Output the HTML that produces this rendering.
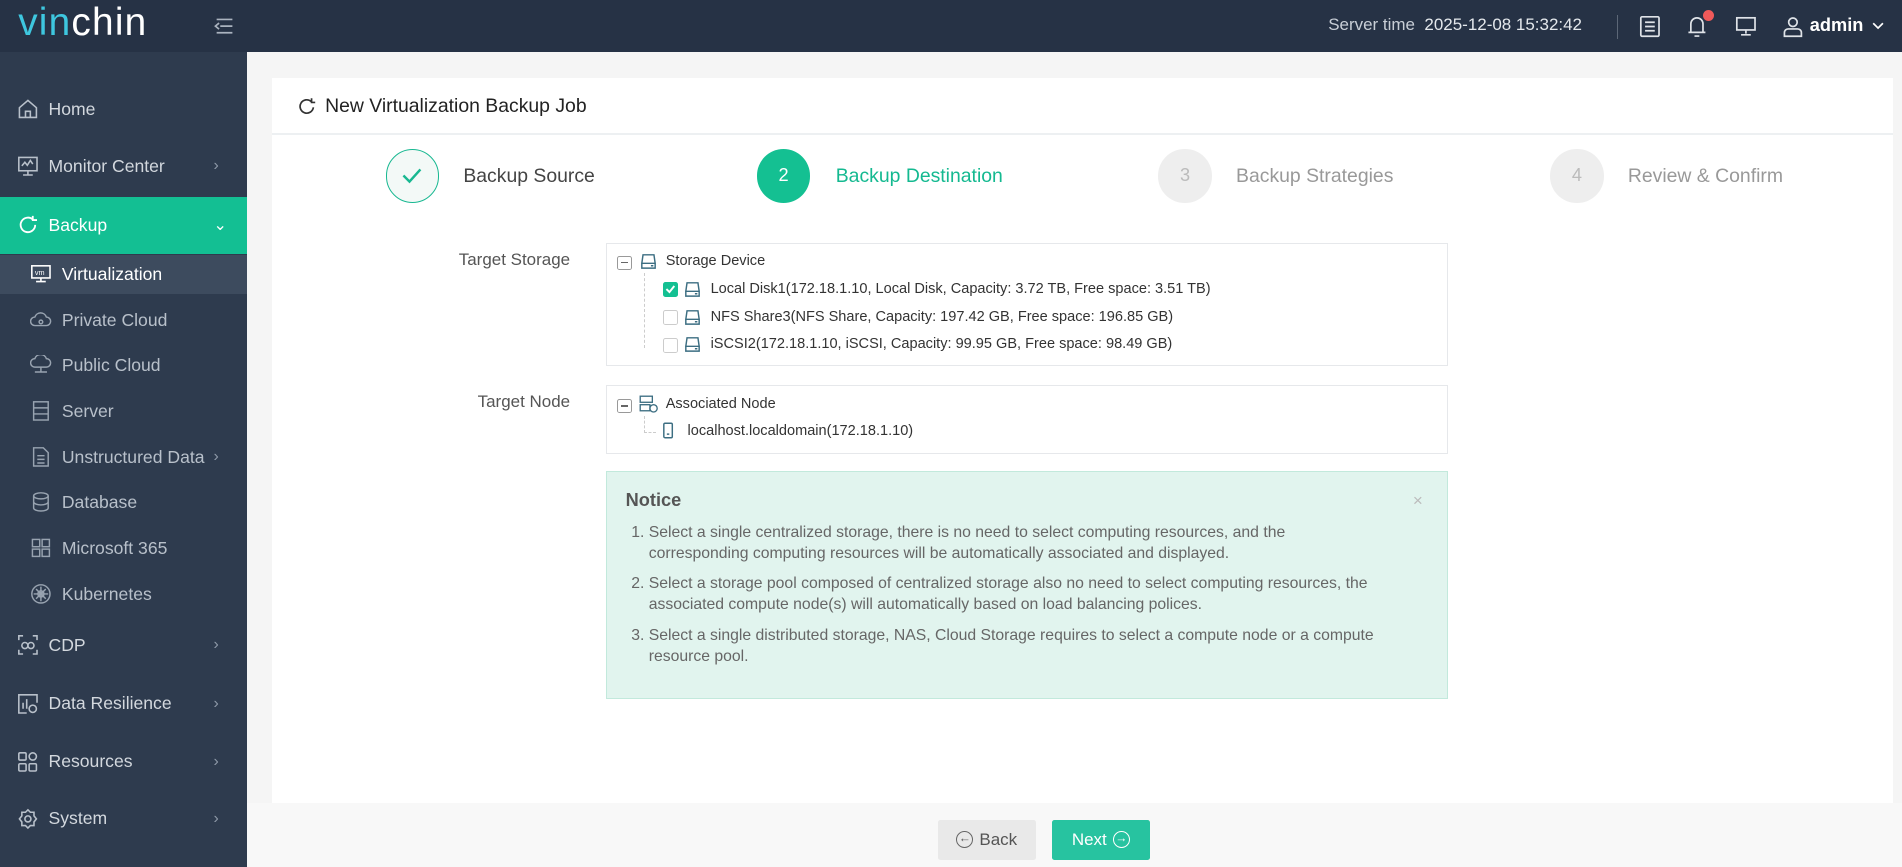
<!DOCTYPE html>
<html><head><meta charset="utf-8"><style>
*{box-sizing:border-box;margin:0;padding:0}
html,body{width:1902px;height:867px;overflow:hidden;background:#f5f5f5;font-family:"Liberation Sans",sans-serif}
#w{zoom:1.21301;width:1568px;height:715px;position:relative}
.a{position:absolute}
.top{left:0;top:0;width:1568px;height:43px;background:#263245}
.side{left:0;top:43px;width:204px;height:672px;background:#2e3b4e}
.ni{position:absolute;left:0;width:204px;color:#d3d8de;font-size:14.5px;display:flex;align-items:center}
.ni svg{position:absolute;left:14px}
.ni span{position:absolute;left:40px}
.sub span{left:51px}
.sub svg{left:25px}
.chev{position:absolute;left:176px;color:#8e99a8;font-size:13px}
.card{left:224px;top:64px;width:1337px;height:598px;background:#fff}
.circ{position:absolute;width:44px;height:44px;border-radius:50%;display:flex;align-items:center;justify-content:center;font-size:15px}
.sl{position:absolute;font-size:16px}
.box{position:absolute;border:1px solid #e6e8eb;background:#fff}
.tr{position:absolute;font-size:12px;color:#333;white-space:nowrap}
.cb{position:absolute;width:12px;height:12px;border:1px solid #ccc;border-radius:2px;background:#fff}
.lbl{position:absolute;font-size:14px;color:#555;text-align:right;width:120px}
.bot{left:204px;top:662px;width:1364px;height:53px;background:#f8f8f8}
</style></head><body><div id="w">
<div class="a top">
 <div class="a" style="left:15px;top:1px;font-size:32px;letter-spacing:1px"><span style="color:#3ec7df">vin</span><span style="color:#fff">chin</span></div>
 <svg class="a" style="left:176px;top:14px" width="17" height="15" viewBox="0 0 17 15" fill="none" stroke="#aab3bf" stroke-width="1.4"><path d="M3 2h13M6 7.5h10M3 13h13M5 5L2 7.5 5 10"/></svg>
 <div class="a" style="left:1095px;top:12px;font-size:14px;color:#c8ced6">Server time&nbsp;&nbsp;<span style="color:#e4e8ec">2025-12-08 15:32:42</span></div>
 <div class="a" style="left:1333px;top:12px;width:1px;height:20px;background:#5c6777"></div>
 <svg class="a" style="left:1351px;top:12px" width="18" height="19" fill="none" stroke="#dfe3e8" stroke-width="1.4"><rect x="1.5" y="1.5" width="15" height="16" rx="1"/><path d="M5 6h8M5 9.5h8M5 13h8"/></svg>
 <svg class="a" style="left:1390px;top:11px" width="20" height="21" fill="none" stroke="#dfe3e8" stroke-width="1.4"><path d="M4 16V9a5 5 0 0110 0v7M2 16h14M7 19h4"/></svg>
 <div class="a" style="left:1404px;top:8px;width:9px;height:9px;border-radius:50%;background:#f05a5a"></div>
 <svg class="a" style="left:1430px;top:13px" width="18" height="17" fill="none" stroke="#dfe3e8" stroke-width="1.4"><rect x="1.5" y="1.5" width="15" height="10"/><path d="M9 11.5v3M5 15.5h8"/></svg>
 <svg class="a" style="left:1469px;top:12px" width="18" height="19" fill="none" stroke="#dfe3e8" stroke-width="1.4"><circle cx="9" cy="6" r="3.5"/><path d="M2 17.5v-3a3 3 0 013-3h8a3 3 0 013 3v3z"/></svg>
 <div class="a" style="left:1492px;top:12px;font-size:15px;color:#fff;font-weight:bold">admin</div>
 <svg class="a" style="left:1543px;top:18px" width="10" height="7" fill="none" stroke="#fff" stroke-width="1.4"><path d="M1 1l4 4 4-4"/></svg>
</div>
<div class="a side">
 <div class="ni" style="top:35px;height:24px"><svg width="18" height="18" fill="none" stroke="#b8c0ca" stroke-width="1.3"><path d="M2 8L9 2l7 6v8H2zM7 16v-5h4v5"/></svg><span>Home</span></div>
 <div class="ni" style="top:82px;height:24px"><svg width="18" height="18" fill="none" stroke="#b8c0ca" stroke-width="1.3"><rect x="1.5" y="2" width="15" height="11"/><path d="M4 9l2.5-3 2 2.5 2.5-4 2 3M9 13v3M5 16.5h8"/></svg><span>Monitor Center</span><div class="chev">&#8250;</div></div>
 <div class="ni" style="top:119px;height:47px;background:#13bf93;color:#fff"><svg width="18" height="18" fill="none" stroke="#fff" stroke-width="1.5"><path d="M15 9a6 6 0 11-2-4.5M13 1.5v3.5h3.5"/></svg><span>Backup</span><div class="chev" style="color:#fff">&#8964;</div></div>
 <div class="ni sub" style="top:167px;height:32px;background:#3d4b5e;color:#fff"><svg width="18" height="16" fill="none" stroke="#fff" stroke-width="1.3"><rect x="1.5" y="1.5" width="15" height="10"/><path d="M9 12v2M5 14.5h8"/><text x="4" y="9" font-size="6" fill="#fff" stroke="none" font-family="Liberation Sans">vm</text></svg><span>Virtualization</span></div>
 <div class="ni sub" style="top:209px;height:24px;color:#b8c0ca"><svg width="18" height="16" fill="none" stroke="#98a3b0" stroke-width="1.2"><path d="M4 12a3.5 3.5 0 010-7 5 5 0 019.5 0 3.5 3.5 0 010 7z"/><circle cx="9" cy="9" r="1.5"/></svg><span>Private Cloud</span></div>
 <div class="ni sub" style="top:246px;height:24px;color:#b8c0ca"><svg width="18" height="16" fill="none" stroke="#98a3b0" stroke-width="1.2"><path d="M4 10a3.5 3.5 0 010-7 5 5 0 019.5 0 3.5 3.5 0 010 7zM9 10v4M4 14h10"/></svg><span>Public Cloud</span></div>
 <div class="ni sub" style="top:284px;height:24px;color:#b8c0ca"><svg width="18" height="18" fill="none" stroke="#98a3b0" stroke-width="1.2"><rect x="3" y="1.5" width="12" height="15"/><path d="M3 6.5h12M3 11.5h12"/></svg><span>Server</span></div>
 <div class="ni sub" style="top:322px;height:24px;color:#b8c0ca"><svg width="18" height="18" fill="none" stroke="#98a3b0" stroke-width="1.2"><path d="M3 1.5h8l4 4v11H3zM6 8h6M6 11h6M6 14h6"/></svg><span>Unstructured Data</span><div class="chev">&#8250;</div></div>
 <div class="ni sub" style="top:359px;height:24px;color:#b8c0ca"><svg width="18" height="18" fill="none" stroke="#98a3b0" stroke-width="1.2"><ellipse cx="9" cy="4" rx="6" ry="2.5"/><path d="M3 4v10c0 1.5 3 2.5 6 2.5s6-1 6-2.5V4M3 9c0 1.5 3 2.5 6 2.5s6-1 6-2.5"/></svg><span>Database</span></div>
 <div class="ni sub" style="top:397px;height:24px;color:#b8c0ca"><svg width="18" height="18" fill="none" stroke="#98a3b0" stroke-width="1.2"><rect x="2" y="2" width="6" height="6"/><rect x="10" y="2" width="6" height="6"/><rect x="2" y="10" width="6" height="6"/><rect x="10" y="10" width="6" height="6"/></svg><span>Microsoft 365</span></div>
 <div class="ni sub" style="top:435px;height:24px;color:#b8c0ca"><svg width="18" height="18" fill="none" stroke="#98a3b0" stroke-width="1.2"><circle cx="9" cy="9" r="7.5"/><circle cx="9" cy="9" r="2.5"/><path d="M9 3v12M3 9h12M5 5l8 8M13 5l-8 8"/></svg><span>Kubernetes</span></div>
 <div class="ni" style="top:477px;height:24px"><svg width="18" height="18" fill="none" stroke="#b8c0ca" stroke-width="1.3"><path d="M1.5 5V1.5H5M13 1.5h3.5V5M16.5 13v3.5H13M5 16.5H1.5V13"/><circle cx="6.5" cy="9.5" r="2.5"/><circle cx="11.5" cy="9.5" r="2.5"/></svg><span>CDP</span><div class="chev">&#8250;</div></div>
 <div class="ni" style="top:525px;height:24px"><svg width="18" height="18" fill="none" stroke="#b8c0ca" stroke-width="1.3"><path d="M8 16.5H1.5V1.5h15V8M5 13V8M8 13V5"/><circle cx="13" cy="13" r="3"/></svg><span>Data Resilience</span><div class="chev">&#8250;</div></div>
 <div class="ni" style="top:573px;height:24px"><svg width="18" height="18" fill="none" stroke="#b8c0ca" stroke-width="1.3"><rect x="1.5" y="1.5" width="6" height="6" rx="1"/><circle cx="13" cy="4.5" r="3"/><rect x="1.5" y="10.5" width="6" height="6" rx="1"/><rect x="10" y="10.5" width="6" height="6" rx="1"/></svg><span>Resources</span><div class="chev">&#8250;</div></div>
 <div class="ni" style="top:620px;height:24px"><svg width="18" height="18" fill="none" stroke="#b8c0ca" stroke-width="1.3"><path d="M9 1.5l2 2h3v3l2 2.5-2 2.5v3h-3l-2 2-2-2H4v-3L2 9l2-2.5v-3h3z"/><circle cx="9" cy="9" r="2.5"/></svg><span>System</span><div class="chev">&#8250;</div></div>
</div>
<div class="a card">
 <svg class="a" style="left:21px;top:16px" width="16" height="16" fill="none" stroke="#333" stroke-width="1.4"><path d="M13.5 8.5a5.5 5.5 0 11-1.8-4.8M12 1v3.5h3"/></svg>
 <div class="a" style="left:44px;top:14px;font-size:16px;color:#222">New Virtualization Backup Job</div>
 <div class="a" style="left:0;top:46px;width:1337px;height:1px;background:#edf0f2"></div>
 <div class="circ" style="left:94px;top:59px;border:1.5px solid #18b891;background:#f3f9f7"><svg width="18" height="14" fill="none" stroke="#18b891" stroke-width="2"><path d="M2 7l5 5 9-10"/></svg></div>
 <div class="sl" style="left:158px;top:72px;color:#444">Backup Source</div>
 <div class="circ" style="left:400px;top:59px;background:#14c092;color:#fff">2</div>
 <div class="sl" style="left:465px;top:72px;color:#14b990">Backup Destination</div>
 <div class="circ" style="left:731px;top:59px;background:#eeeeee;color:#bbb">3</div>
 <div class="sl" style="left:795px;top:72px;color:#999">Backup Strategies</div>
 <div class="circ" style="left:1054px;top:59px;background:#eeeeee;color:#bbb">4</div>
 <div class="sl" style="left:1118px;top:72px;color:#999">Review &amp; Confirm</div>

 <div class="lbl" style="left:126px;top:142px">Target Storage</div>
 <div class="box" style="left:276px;top:136px;width:694px;height:102px">
  <div class="cb" style="left:8px;top:10px;border-color:#999"><div style="position:absolute;left:2px;top:4.5px;width:6px;height:1px;background:#666"></div></div>
  <svg class="a" style="left:27px;top:8px" width="14" height="14" fill="none" stroke="#3c6e82" stroke-width="1.2"><path d="M2.5 1.5h9l1 7h-11zM1.5 8.5h11v4h-11zM9 10.5h2"/></svg>
  <div class="tr" style="left:48px;top:8px">Storage Device</div>
  <div class="a" style="left:30px;top:24px;width:0;height:62px;border-left:1px dashed #ccc"></div>
  <div class="cb" style="left:46px;top:32px;background:#14c092;border-color:#14c092"><svg width="10" height="10" style="position:absolute;left:0;top:0" fill="none" stroke="#fff" stroke-width="1.6"><path d="M2 5l2.5 2.5 4-5"/></svg></div>
  <svg class="a" style="left:63px;top:31px" width="14" height="14" fill="none" stroke="#3c6e82" stroke-width="1.2"><path d="M2.5 1.5h9l1 7h-11zM1.5 8.5h11v4h-11zM9 10.5h2"/></svg>
  <div class="tr" style="left:85px;top:31px">Local Disk1(172.18.1.10, Local Disk, Capacity: 3.72 TB, Free space: 3.51 TB)</div>
  <div class="cb" style="left:46px;top:55px"></div>
  <svg class="a" style="left:63px;top:54px" width="14" height="14" fill="none" stroke="#3c6e82" stroke-width="1.2"><path d="M2.5 1.5h9l1 7h-11zM1.5 8.5h11v4h-11zM9 10.5h2"/></svg>
  <div class="tr" style="left:85px;top:54px">NFS Share3(NFS Share, Capacity: 197.42 GB, Free space: 196.85 GB)</div>
  <div class="cb" style="left:46px;top:78px"></div>
  <svg class="a" style="left:63px;top:76px" width="14" height="14" fill="none" stroke="#3c6e82" stroke-width="1.2"><path d="M2.5 1.5h9l1 7h-11zM1.5 8.5h11v4h-11zM9 10.5h2"/></svg>
  <div class="tr" style="left:85px;top:76px">iSCSI2(172.18.1.10, iSCSI, Capacity: 99.95 GB, Free space: 98.49 GB)</div>
 </div>
 <div class="lbl" style="left:126px;top:259px">Target Node</div>
 <div class="box" style="left:276px;top:253px;width:694px;height:57px">
  <div class="cb" style="left:8px;top:11px;border-color:#999"><div style="position:absolute;left:2px;top:4.5px;width:6px;height:1px;background:#666"></div></div>
  <svg class="a" style="left:26px;top:8px" width="16" height="15" fill="none" stroke="#3c6e82" stroke-width="1.1"><rect x="1" y="1" width="10" height="5"/><rect x="1" y="8" width="8" height="5"/><circle cx="12" cy="11" r="3"/></svg>
  <div class="tr" style="left:48px;top:9px">Associated Node</div>
  <div class="a" style="left:30px;top:25px;width:10px;height:14px;border-left:1px dashed #ccc;border-bottom:1px dashed #ccc"></div>
  <svg class="a" style="left:45px;top:30px" width="10" height="14" fill="none" stroke="#3c6e82" stroke-width="1.2"><rect x="1.5" y="1" width="7" height="12" rx="1"/><path d="M4 10h2"/></svg>
  <div class="tr" style="left:66px;top:31px">localhost.localdomain(172.18.1.10)</div>
 </div>
 <div class="a" style="left:276px;top:324px;width:694px;height:188px;background:#e1f4ee;border:1px solid #c2e9dc">
  <div class="a" style="left:15px;top:15px;font-size:15px;font-weight:bold;color:#555">Notice</div>
  <div class="a" style="left:664px;top:16px;font-size:14px;color:#bbb">×</div>
  <ol class="a" style="left:34px;top:42px;width:660px;font-size:13px;line-height:17.3px;color:#666;padding-left:0;white-space:nowrap">
   <li style="margin-bottom:8px">Select a single centralized storage, there is no need to select computing resources, and the<br>corresponding computing resources will be automatically associated and displayed.</li>
   <li style="margin-bottom:8px">Select a storage pool composed of centralized storage also no need to select computing resources, the<br>associated compute node(s) will automatically based on load balancing polices.</li>
   <li>Select a single distributed storage, NAS, Cloud Storage requires to select a compute node or a compute<br>resource pool.</li>
  </ol>
 </div>
</div>
<div class="a bot">
 <div class="a" style="left:569px;top:14px;width:81px;height:33px;background:#e9e9e9;border-radius:2px;font-size:14px;color:#555;display:flex;align-items:center;justify-content:center;gap:5px"><span style="display:inline-block;width:14px;height:14px;border:1.3px solid #666;border-radius:50%;font-size:10px;line-height:11px;text-align:center">&#8592;</span>Back</div>
 <div class="a" style="left:663px;top:14px;width:81px;height:33px;background:#27c3a0;border-radius:2px;font-size:14px;color:#fff;display:flex;align-items:center;justify-content:center;gap:5px">Next<span style="display:inline-block;width:14px;height:14px;border:1.3px solid #fff;border-radius:50%;font-size:10px;line-height:11px;text-align:center">&#8594;</span></div>
</div>
</div></body></html>
